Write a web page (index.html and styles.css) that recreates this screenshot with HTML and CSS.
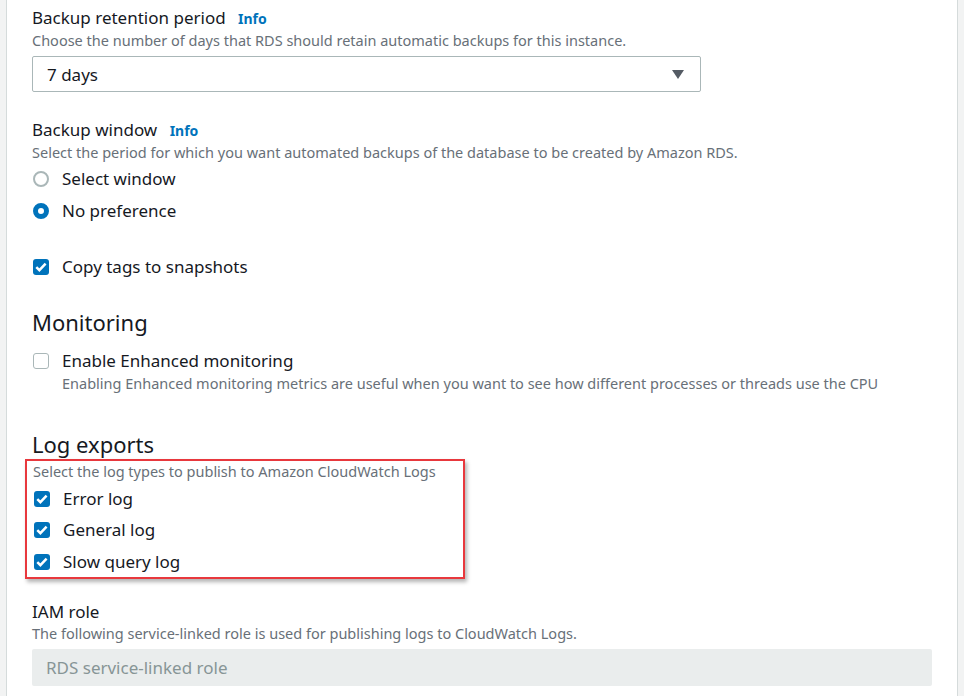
FILE: index.html
```html
<!DOCTYPE html>
<html lang="en">
<head>
  <meta charset="UTF-8">
  <meta name="viewport" content="width=device-width, initial-scale=1.0">
  <title>Backup and monitoring settings</title>
  <link rel="stylesheet" href="styles.css">
</head>
<body>
  <div class="panel">
    <div class="field">
      <div class="label">Backup retention period <a class="info">Info</a></div>
      <div class="desc">Choose the number of days that RDS should retain automatic backups for this instance.</div>
      <div class="select">
        <span>7 days</span>
        <svg class="caret" width="12" height="9" viewBox="0 0 12 9"><path d="M0 0h12L6 9z" fill="#545b64"/></svg>
      </div>
    </div>

    <div class="field window">
      <div class="label">Backup window <a class="info">Info</a></div>
      <div class="desc">Select the period for which you want automated backups of the database to be created by Amazon RDS.</div>
      <div class="option first"><span class="radio"></span>Select window</div>
      <div class="option second"><span class="radio on"></span>No preference</div>
    </div>

    <div class="option copy"><span class="check on"><svg width="16" height="16" viewBox="0 0 16 16"><path d="M3.3 8.1l3.1 3.1 6.2-6.6" fill="none" stroke="#fff" stroke-width="2.5"/></svg></span>Copy tags to snapshots</div>

    <h3 class="section monitoring">Monitoring</h3>
    <div class="option"><span class="check"></span>Enable Enhanced monitoring</div>
    <div class="desc sub">Enabling Enhanced monitoring metrics are useful when you want to see how different processes or threads use the CPU</div>

    <h3 class="section logs">Log exports</h3>
    <div class="highlight">
      <div class="desc">Select the log types to publish to Amazon CloudWatch Logs</div>
      <div class="option log first"><span class="check on"><svg width="16" height="16" viewBox="0 0 16 16"><path d="M3.3 8.1l3.1 3.1 6.2-6.6" fill="none" stroke="#fff" stroke-width="2.5"/></svg></span>Error log</div>
      <div class="option log second"><span class="check on"><svg width="16" height="16" viewBox="0 0 16 16"><path d="M3.3 8.1l3.1 3.1 6.2-6.6" fill="none" stroke="#fff" stroke-width="2.5"/></svg></span>General log</div>
      <div class="option log third"><span class="check on"><svg width="16" height="16" viewBox="0 0 16 16"><path d="M3.3 8.1l3.1 3.1 6.2-6.6" fill="none" stroke="#fff" stroke-width="2.5"/></svg></span>Slow query log</div>
    </div>

    <div class="field iam">
      <div class="label">IAM role</div>
      <div class="desc">The following service-linked role is used for publishing logs to CloudWatch Logs.</div>
      <div class="input">RDS service-linked role</div>
    </div>
  </div>
</body>
</html>
```

FILE: styles.css
```css
body {
  font-family: "Noto Sans", "Open Sans", sans-serif;
  margin: 0;
  padding: 0;
  background-color: #f2f3f3;
  color: #16191f;
  height: 696px;
  overflow: hidden;
}
.panel {
  margin: 0 6px;
  background-color: white;
  border-left: 1px solid #d5dbdb;
  border-right: 1px solid #d5dbdb;
  padding: 7px 24px 0 25px;
  height: 696px;
  box-sizing: border-box;
  display: flex;
  flex-direction: column;
}
.field {
  display: flex;
  flex-direction: column;
}
.label {
  font-size: 17px;
  line-height: 22px;
}
.info {
  color: #0073bb;
  font-weight: bold;
  font-size: 14px;
  margin-left: 8px;
}
.desc {
  font-size: 14.5px;
  line-height: 20px;
  color: #687078;
}
.select {
  margin-top: 6px;
  width: 669px;
  height: 36px;
  box-sizing: border-box;
  border: 1px solid #aab7b8;
  border-radius: 2px;
  display: flex;
  align-items: center;
  justify-content: space-between;
  padding: 0 16px 0 14px;
  font-size: 17px;
}
.caret {
  margin-top: 1px;
}
.window {
  margin-top: 27px;
}
.option {
  display: flex;
  align-items: center;
  font-size: 17px;
  line-height: 24px;
  gap: 13px;
  padding-left: 1px;
}
.window .first {
  margin-top: 5px;
}
.window .second {
  margin-top: 8px;
}
.copy {
  margin-top: 32px;
}
.radio {
  width: 16px;
  height: 16px;
  box-sizing: border-box;
  border: 2px solid #aab7b8;
  border-radius: 50%;
  background: white;
}
.radio.on {
  border: 5px solid #0073bb;
}
.check {
  width: 16px;
  height: 16px;
  box-sizing: border-box;
  border: 1px solid #aab7b8;
  border-radius: 3px;
  background: white;
  display: flex;
}
.check.on {
  border: none;
  background: #0073bb;
}
.section {
  font-size: 22px;
  font-weight: normal;
  line-height: 30px;
  margin: 0;
}
.monitoring {
  margin-top: 28px;
  margin-bottom: 12px;
}
.sub {
  margin-left: 30px;
}
.logs {
  margin-top: 36px;
}
.highlight {
  align-self: flex-start;
  width: 440px;
  box-sizing: border-box;
  margin: 0 0 0 -7px;
  padding: 0 0 3px 6px;
  border: 2px solid #e8383d;
  box-shadow: 2px 3px 4px rgba(0, 0, 0, 0.3);
}
.log.first {
  margin-top: 6px;
}
.log.second {
  margin-top: 7px;
}
.log.third {
  margin-top: 8px;
}
.iam {
  margin-top: 22px;
}
.input {
  margin-top: 6px;
  width: 900px;
  height: 37px;
  box-sizing: border-box;
  background-color: #eaeded;
  border-radius: 2px;
  display: flex;
  align-items: center;
  padding-left: 14px;
  font-size: 17px;
  color: #879596;
}
```
